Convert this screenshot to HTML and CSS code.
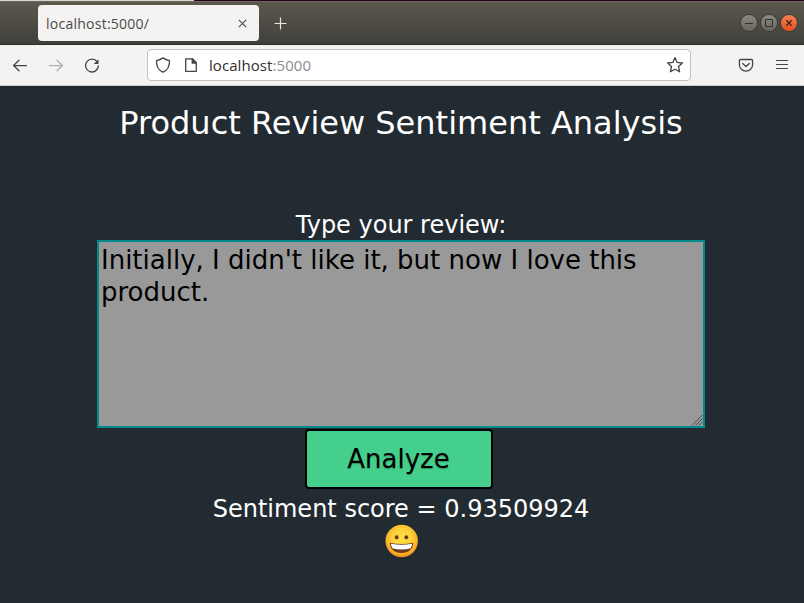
FILE: index.html
```html
<!DOCTYPE html>
<html lang="en">
<head>
<meta charset="utf-8">
<title>localhost:5000/</title>
<link rel="stylesheet" href="styles.css">
</head>
<body>
<div class="desktop-edge"></div>
<header class="titlebar">
  <div class="tab">
    <span class="tab-title">localhost:5000/</span>
    <svg class="tab-close" width="9" height="9" viewBox="0 0 9 9"><path d="M.8.8l7.4 7.4M8.2.8L.8 8.2" stroke="#4b4b49" stroke-width="1.1"/></svg>
  </div>
  <svg class="new-tab" width="13" height="13" viewBox="0 0 13 13"><path d="M6.5 .5v12M.5 6.5h12" stroke="#e6e5e0" stroke-width="1.2"/></svg>
  <div class="controls">
    <span class="control"><svg width="16" height="16" viewBox="0 0 16 16"><path d="M4 8.5h8" stroke="#33322d"/></svg></span>
    <span class="control"><svg width="16" height="16" viewBox="0 0 16 16"><path d="M4.500 4.500h7v7h-7z" fill="none" stroke="#33322d"/></svg></span>
    <span class="control control-close"><svg width="16" height="16" viewBox="0 0 16 16"><path d="M5.300 5.300l5.400 5.400M10.700 5.300l-5.400 5.400" stroke="#3d2416" stroke-width="1.3"/></svg></span>
  </div>
</header>
<nav class="toolbar">
  <svg class="back" width="16" height="16" viewBox="0 0 16 16" fill="none" stroke="#454545" stroke-width="1.25" stroke-linecap="round" stroke-linejoin="round"><path d="M14.5 8.500H1.700M7 3.200L1.500 8.500 7 13.800"/></svg>
  <svg class="forward" width="16" height="16" viewBox="0 0 16 16" fill="none" stroke="#b0afae" stroke-width="1.25" stroke-linecap="round" stroke-linejoin="round"><path d="M1.500 8.500h12.800M9 3.200L14.500 8.500 9 13.800"/></svg>
  <svg class="reload" width="16" height="16" viewBox="0 0 16 16" fill="none" stroke="#454545" stroke-width="1.3" stroke-linecap="round"><path d="M13.200 4.800A6.400 6.400 0 1 0 14.400 8.900"/><path d="M14.500 2.300v4.700H9.800z" fill="#454545" stroke="none"/></svg>
  <div class="address">
    <svg width="16" height="16" viewBox="0 0 16 16" fill="none" stroke="#454545" stroke-width="1.3" stroke-linejoin="round"><path d="M8 .9C6.200 2.200 3.800 3.100 1.500 3.600c-.2 4.700 1.500 9.300 6.500 11.600 5-2.300 6.700-6.900 6.500-11.600C12.200 3.100 9.800 2.200 8 .9z"/></svg>
    <svg class="page-icon" width="16" height="16" viewBox="0 0 16 16" fill="none" stroke="#454545" stroke-width="1.3" stroke-linejoin="round"><path d="M2.700 1.800H9.300L13.300 5.800V14.300H2.700z"/><path d="M9.200 1.800V6h4.100z" fill="#454545"/></svg>
    <span class="url">localhost<span class="port">:5000</span></span>
    <svg class="star" width="18" height="18" viewBox="0 0 18 18" fill="none" stroke="#454545" stroke-width="1.3" stroke-linejoin="round"><path d="M9 1.600l2.200 4.800 5.200.6-3.900 3.500 1.100 5.300L9 13.200l-4.600 2.600 1.100-5.300L1.600 7l5.200-.6z"/></svg>
  </div>
  <svg class="pocket" width="16" height="16" viewBox="0 0 16 16" fill="none" stroke="#454545" stroke-width="1.3" stroke-linecap="round" stroke-linejoin="round"><path d="M2.600 2.500h10.800q1.200 0 1.200 1.200v4.100a6.600 6.400 0 0 1-13.200 0V3.700q0-1.200 1.200-1.200z"/><path d="M4.700 6.500L8 9.500l3.300-3"/></svg>
  <svg class="menu" width="14" height="12" viewBox="0 0 14 12"><path d="M1 1.500h12M1 5.500h12M1 9.500h12" stroke="#454545" stroke-width="1.200"/></svg>
</nav>
<main class="page">
  <h1>Product Review Sentiment Analysis</h1>
  <p class="label">Type your review:</p>
  <div class="review">Initially, I didn't like it, but now I love this product.
    <svg class="grip" width="12" height="12" viewBox="0 0 12 12"><path d="M1 11.500L11.500 1M4.500 11.500l7-7M8 11.500L11.500 8" stroke="#484848" fill="none"/></svg>
  </div>
  <button class="analyze">Analyze</button>
  <p class="score">Sentiment score = 0.93509924</p>
  <svg class="face" width="34" height="34" viewBox="0 0 34 34">
    <defs><radialGradient id="skin" cx=".5" cy=".42" r=".58"><stop offset="0" stop-color="#ffe14a"/><stop offset=".55" stop-color="#fdcf38"/><stop offset=".85" stop-color="#f9ad27"/><stop offset="1" stop-color="#e98a18"/></radialGradient></defs>
    <circle cx="16.700" cy="17" r="16.200" fill="url(#skin)"/>
    <ellipse cx="11.700" cy="13.300" rx="1.900" ry="2.100" fill="#6b3a0c"/>
    <ellipse cx="21.300" cy="13.300" rx="1.900" ry="2.100" fill="#6b3a0c"/>
    <path d="M4.800 18.700Q16.500 21.300 28.200 18.700C28.200 25.200 23.300 29 16.500 29S4.800 25.200 4.800 18.700z" fill="#6b3a1e"/>
    <path d="M5.800 19.700q10.700 2.200 21.400 0-.3 3-1.900 4.900-8.800 1.700-17.600 0-1.600-1.900-1.900-4.900z" fill="#fff"/>
  </svg>
</main>
</body>
</html>
```
FILE: styles.css
```css
* { box-sizing: border-box; }
body {
  margin: 0;
  height: 603px;
  display: flex;
  flex-direction: column;
  overflow: hidden;
  background: #232b32;
  font-family: "DejaVu Sans", sans-serif;
}
svg { display: block; flex: none; }
.desktop-edge {
  height: 1px;
  background: linear-gradient(90deg, #d5d5d3 194px, #2c001e 194px);
}
.titlebar {
  height: 44px;
  display: flex;
  align-items: center;
  padding: 0 7px 0 38px;
  background: linear-gradient(#5b584d, #403f3a);
  border-top: 1px solid #6b685c;
  border-bottom: 1px solid #2d2c29;
}
.tab {
  width: 221px;
  height: 36px;
  display: flex;
  align-items: center;
  justify-content: space-between;
  padding: 0 12px 0 8px;
  border-radius: 4px;
  background: #f4f3f1;
}
.tab-title {
  font: 14px/20px "Open Sans", sans-serif;
  letter-spacing: 0.25px;
  color: #4a4a4a;
  position: relative;
  top: 1px;
}
.new-tab { margin-left: 15px; }
.controls { display: flex; gap: 4px; margin-left: auto; }
.control {
  width: 16px;
  height: 16px;
  border-radius: 50%;
  background: linear-gradient(#8c8982, #66645d);
  box-shadow: 0 0 0 1px #3a3934;
}
.control-close { background: linear-gradient(#f58055, #e4501e); }
.toolbar {
  height: 41px;
  display: flex;
  align-items: center;
  padding: 0 15px 0 12px;
  background: #f4f3f1;
  border-bottom: 1px solid #cfcecc;
}
.forward { margin-left: 20px; }
.reload { margin-left: 20px; }
.address {
  width: 544px;
  height: 32px;
  display: flex;
  align-items: center;
  margin-left: 47px;
  padding: 0 6px 0 7px;
  border: 1px solid #c3c2c0;
  border-radius: 4px;
  background: #fff;
}
.page-icon { margin-left: 12px; }
.url {
  margin-left: 10px;
  font: 15px/22px "Open Sans", sans-serif;
  letter-spacing: 0.07px;
  color: #303030;
}
.port { color: #8c8c8c; }
.star { margin-left: auto; }
.pocket { margin-left: 47px; }
.menu { margin-left: auto; }
.page {
  flex: 1;
  display: flex;
  flex-direction: column;
  align-items: center;
  padding-right: 2px;
  color: #fff;
}
h1 { margin: 18px 0 0; font-size: 32px; line-height: 38px; font-weight: 400; }
p { margin: 0; font-size: 24px; line-height: 28px; }
.label { margin-top: 69px; }
.review {
  position: relative;
  width: 608px;
  height: 188px;
  margin-top: 1px;
  padding: 2px;
  border: 2px solid #008b8b;
  background: #999;
  color: #000;
  font-size: 26px;
  line-height: 32px;
}
.grip { position: absolute; right: 0; bottom: 0; }
.analyze {
  width: 188px;
  height: 60px;
  margin: 1px 5px 0 0;
  padding: 0;
  border: 2px solid #000;
  border-radius: 4px;
  background: #44cf8c;
  color: #000;
  font: 26px/32px "DejaVu Sans", sans-serif;
  text-shadow: 0 1px 1px rgba(0, 0, 0, 0.3);
}
.score { margin-top: 6px; }
.face { margin: 1px 0 0 1px; }
```
